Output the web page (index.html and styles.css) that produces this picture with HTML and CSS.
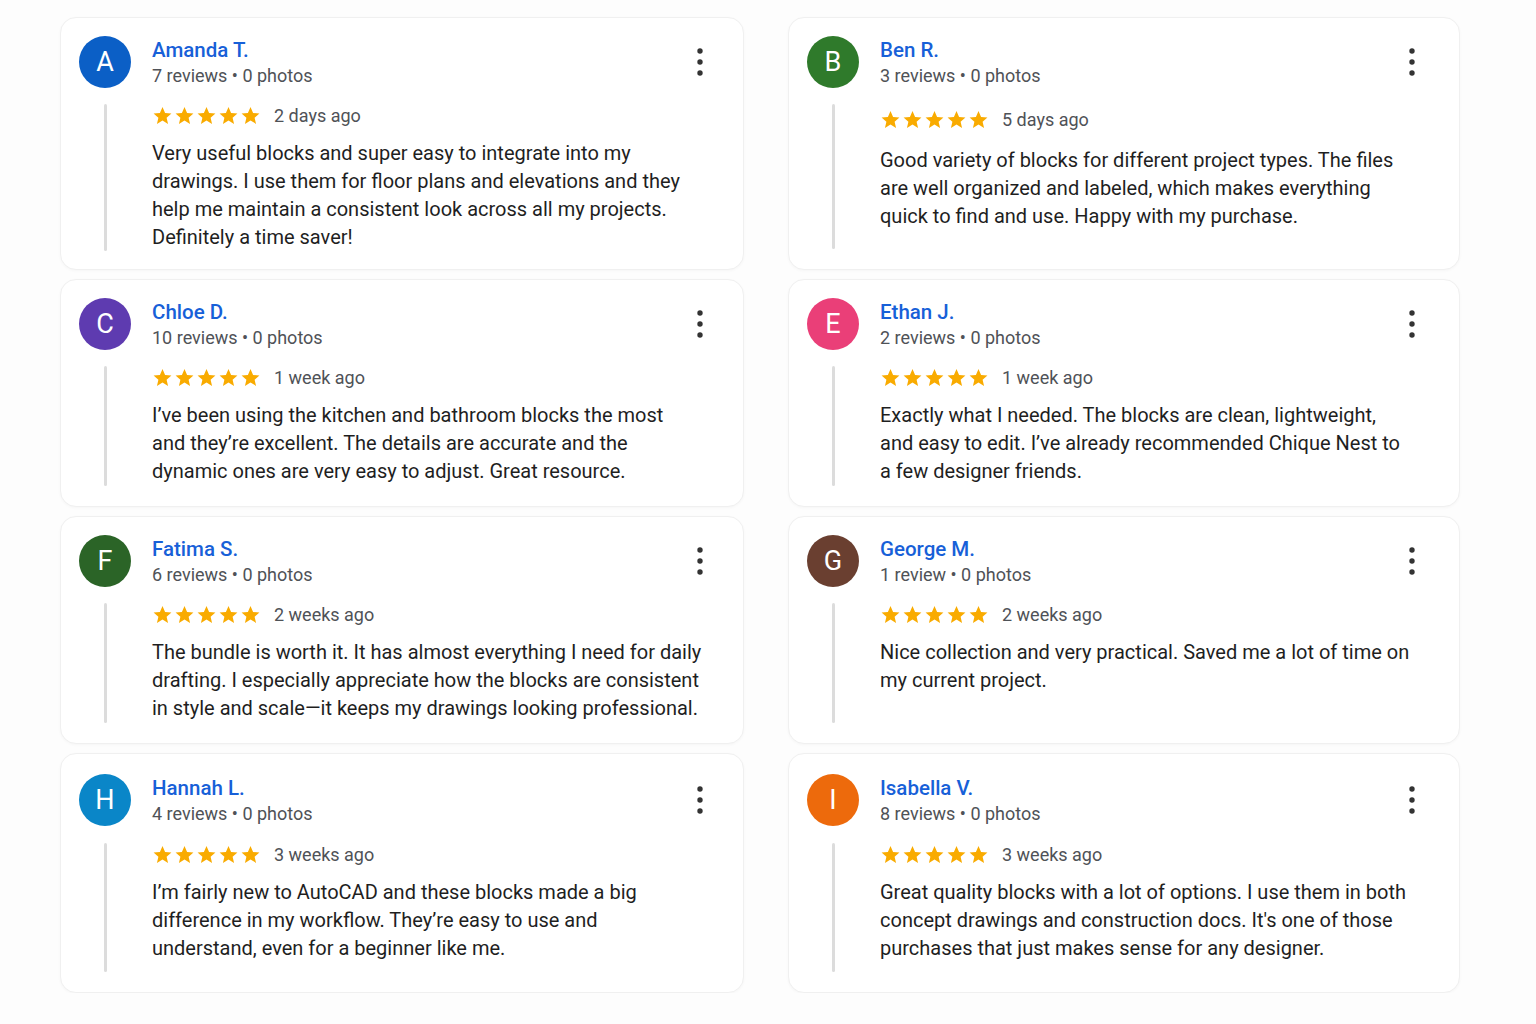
FILE: index.html
```html
<!DOCTYPE html>
<html lang="en">
<head>
    <meta charset="UTF-8">
    <meta name="viewport" content="width=device-width, initial-scale=1.0">
    <title>Customer Reviews</title>
    <link rel="stylesheet" href="styles.css">
</head>
<body>
    <svg width="0" height="0" class="defs">
        <defs>
            <symbol id="star" viewBox="0 0 24 24">
                <path d="M12 2.3l2.95 6.7 7.25.65-5.5 4.8 1.65 7.15L12 17.85l-6.35 3.75 1.65-7.15-5.5-4.8 7.25-.65z"/>
            </symbol>
            <symbol id="dots" viewBox="0 0 10 30">
                <circle cx="5" cy="4" r="2.7"/>
                <circle cx="5" cy="15" r="2.7"/>
                <circle cx="5" cy="26" r="2.7"/>
            </symbol>
        </defs>
    </svg>

    <div class="reviews" id="reviews"></div>

    <script>
        var reviews = [
            { name: "Amanda T.", color: "#0b5fc6", meta: "7 reviews • 0 photos", date: "2 days ago",
              lines: ["Very useful blocks and super easy to integrate into my",
                      "drawings. I use them for floor plans and elevations and they",
                      "help me maintain a consistent look across all my projects.",
                      "Definitely a time saver!"] },
            { name: "Ben R.", color: "#2f7a2b", meta: "3 reviews • 0 photos", date: "5 days ago", shift: true,
              lines: ["Good variety of blocks for different project types. The files",
                      "are well organized and labeled, which makes everything",
                      "quick to find and use. Happy with my purchase."] },
            { name: "Chloe D.", color: "#5e3bb0", meta: "10 reviews • 0 photos", date: "1 week ago",
              lines: ["I’ve been using the kitchen and bathroom blocks the most",
                      "and they’re excellent. The details are accurate and the",
                      "dynamic ones are very easy to adjust. Great resource."] },
            { name: "Ethan J.", color: "#ea3f78", meta: "2 reviews • 0 photos", date: "1 week ago",
              lines: ["Exactly what I needed. The blocks are clean, lightweight,",
                      "and easy to edit. I’ve already recommended Chique Nest to",
                      "a few designer friends."] },
            { name: "Fatima S.", color: "#2b6427", meta: "6 reviews • 0 photos", date: "2 weeks ago",
              lines: ["The bundle is worth it. It has almost everything I need for daily",
                      "drafting. I especially appreciate how the blocks are consistent",
                      "in style and scale—it keeps my drawings looking professional."] },
            { name: "George M.", color: "#6a3f30", meta: "1 review • 0 photos", date: "2 weeks ago",
              lines: ["Nice collection and very practical. Saved me a lot of time on",
                      "my current project."] },
            { name: "Hannah L.", color: "#0a86c8", meta: "4 reviews • 0 photos", date: "3 weeks ago",
              lines: ["I’m fairly new to AutoCAD and these blocks made a big",
                      "difference in my workflow. They’re easy to use and",
                      "understand, even for a beginner like me."] },
            { name: "Isabella V.", color: "#ed6a0c", meta: "8 reviews • 0 photos", date: "3 weeks ago",
              lines: ["Great quality blocks with a lot of options. I use them in both",
                      "concept drawings and construction docs. It's one of those",
                      "purchases that just makes sense for any designer."] }
        ];

        var list = document.getElementById("reviews");
        var stars = "";
        for (var s = 0; s < 5; s++) {
            stars += '<svg class="star"><use href="#star"/></svg>';
        }

        reviews.forEach(function (r) {
            var card = document.createElement("div");
            card.className = r.shift ? "card card-loose" : "card";
            card.innerHTML =
                '<div class="head">' +
                    '<div class="avatar" style="background:' + r.color + '">' + r.name.charAt(0) + '</div>' +
                    '<div class="who">' +
                        '<div class="name">' + r.name + '</div>' +
                        '<div class="meta">' + r.meta + '</div>' +
                    '</div>' +
                    '<svg class="more"><use href="#dots"/></svg>' +
                '</div>' +
                '<div class="body">' +
                    '<div class="rail"><span></span></div>' +
                    '<div class="content">' +
                        '<div class="rating"><span class="stars">' + stars + '</span><span class="date">' + r.date + '</span></div>' +
                        '<p class="text">' + r.lines.join("<br>") + '</p>' +
                    '</div>' +
                '</div>';
            list.appendChild(card);
        });
    </script>
</body>
</html>
```

FILE: styles.css
```css
body {
    margin: 0;
    background: #fdfdfd;
    font-family: Roboto, "Noto Sans", sans-serif;
    color: #1f1f1f;
}
.defs {
    position: absolute;
}
.reviews {
    display: grid;
    grid-template-columns: 684px 672px;
    grid-template-rows: 253px 228px 228px 240px;
    column-gap: 44px;
    row-gap: 9px;
    padding: 17px 0 0 60px;
}
.card {
    background: #fff;
    border: 1px solid #f0f0f0;
    border-radius: 16px;
    box-shadow: 0 1px 3px rgba(0, 0, 0, 0.03);
    padding: 18px 38px 20px 18px;
    display: flex;
    flex-direction: column;
    box-sizing: border-box;
}
.card:nth-child(even) {
    padding-right: 42px;
}
.card:nth-child(n+7) {
    padding-top: 20px;
}
.card:nth-child(n+7) .body {
    margin-top: 17px;
}
.head {
    display: flex;
    align-items: flex-start;
}
.avatar {
    width: 52px;
    height: 52px;
    border-radius: 50%;
    color: #fff;
    font-size: 27px;
    display: flex;
    align-items: center;
    justify-content: center;
    flex-shrink: 0;
}
.who {
    margin-left: 21px;
    flex: 1;
}
.name {
    color: #1760d8;
    font-size: 20.5px;
    font-weight: 500;
    line-height: 26px;
    margin-top: 1px;
}
.meta {
    color: #4f5257;
    font-size: 18px;
    line-height: 24px;
    margin-top: 1px;
}
.more {
    width: 10px;
    height: 30px;
    fill: #333;
    margin-top: 11px;
}
.body {
    display: flex;
    flex: 1;
    margin-top: 16px;
}
.card-loose .content {
    padding-top: 4px;
}
.card-loose .text {
    margin-top: 16px;
}
.rail {
    width: 52px;
    display: flex;
    justify-content: center;
    flex-shrink: 0;
}
.rail span {
    width: 3px;
    background: #dcdcdc;
    border-radius: 2px;
}
.content {
    margin-left: 21px;
}
.rating {
    display: flex;
    align-items: center;
    height: 22px;
}
.stars {
    display: flex;
    gap: 1px;
}
.star {
    width: 21px;
    height: 21px;
    fill: #f9ab00;
}
.date {
    margin-left: 13px;
    font-size: 18px;
    color: #4f5257;
}
.text {
    margin: 13px 0 0;
    font-size: 20px;
    line-height: 28px;
    white-space: nowrap;
}
```
